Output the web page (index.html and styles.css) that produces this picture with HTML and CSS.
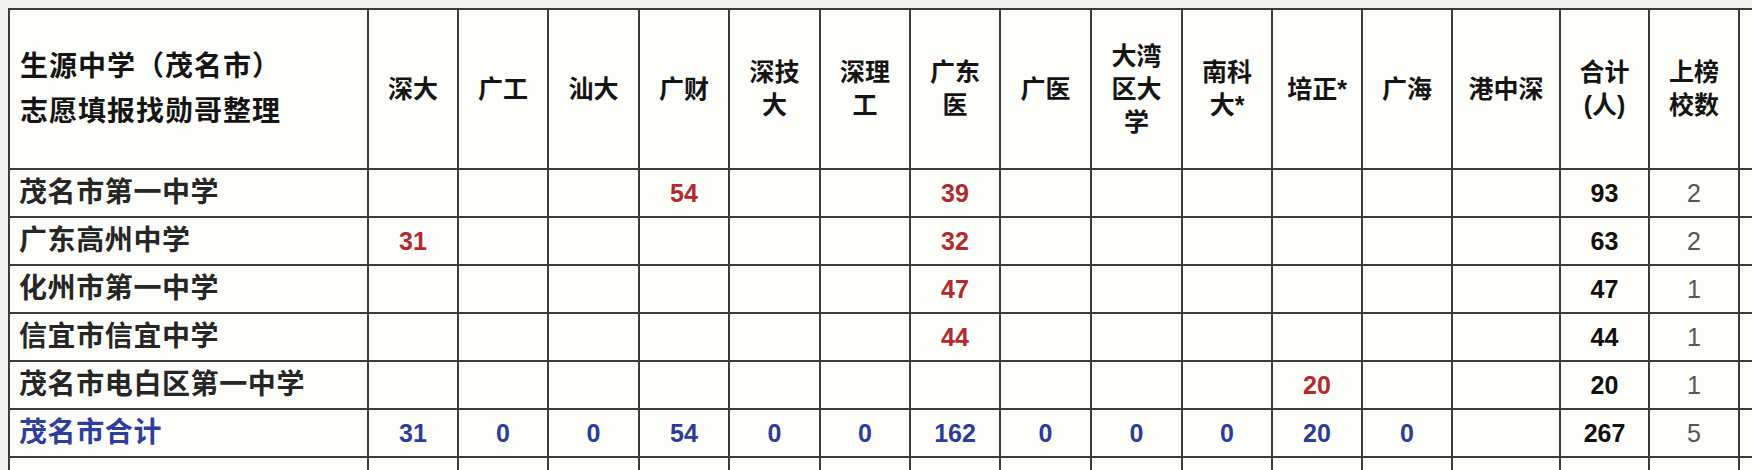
FILE: index.html
```html
<!DOCTYPE html>
<html lang="zh-CN">
<head>
<meta charset="utf-8">
<title>生源中学（茂名市）</title>
<link rel="stylesheet" href="styles.css">
</head>
<body>
<div class="sheet">
<table class="grid">
  <thead>
    <tr class="head">
      <th class="title w-name">生源中学（茂名市）<br>志愿填报找勋哥整理</th>
      <th class="w90">深大</th>
      <th class="w90">广工</th>
      <th class="w91">汕大</th>
      <th class="w90">广财</th>
      <th class="w91">深技<br>大</th>
      <th class="w90">深理<br>工</th>
      <th class="w90">广东<br>医</th>
      <th class="w91">广医</th>
      <th class="w91">大湾<br>区大<br>学</th>
      <th class="w90">南科<br>大*</th>
      <th class="w90">培正*</th>
      <th class="w90">广海</th>
      <th class="w108">港中深</th>
      <th class="w89">合计<br>(人)</th>
      <th class="w90">上榜<br>校数</th>
      <th class="w-extra"></th>
    </tr>
  </thead>
  <tbody>
    <tr>
      <td class="name">茂名市第一中学</td>
      <td></td><td></td><td></td><td class="red">54</td><td></td><td></td><td class="red">39</td>
      <td></td><td></td><td></td><td></td><td></td><td></td>
      <td class="total">93</td><td class="count">2</td><td></td>
    </tr>
    <tr>
      <td class="name">广东高州中学</td>
      <td class="red">31</td><td></td><td></td><td></td><td></td><td></td><td class="red">32</td>
      <td></td><td></td><td></td><td></td><td></td><td></td>
      <td class="total">63</td><td class="count">2</td><td></td>
    </tr>
    <tr>
      <td class="name">化州市第一中学</td>
      <td></td><td></td><td></td><td></td><td></td><td></td><td class="red">47</td>
      <td></td><td></td><td></td><td></td><td></td><td></td>
      <td class="total">47</td><td class="count">1</td><td></td>
    </tr>
    <tr>
      <td class="name">信宜市信宜中学</td>
      <td></td><td></td><td></td><td></td><td></td><td></td><td class="red">44</td>
      <td></td><td></td><td></td><td></td><td></td><td></td>
      <td class="total">44</td><td class="count">1</td><td></td>
    </tr>
    <tr>
      <td class="name">茂名市电白区第一中学</td>
      <td></td><td></td><td></td><td></td><td></td><td></td><td></td>
      <td></td><td></td><td></td><td class="red">20</td><td></td><td></td>
      <td class="total">20</td><td class="count">1</td><td></td>
    </tr>
    <tr class="sum">
      <td class="name">茂名市合计</td>
      <td>31</td><td>0</td><td>0</td><td>54</td><td>0</td><td>0</td><td>162</td>
      <td>0</td><td>0</td><td>0</td><td>20</td><td>0</td><td></td>
      <td class="total">267</td><td class="count">5</td><td></td>
    </tr>
    <tr>
      <td class="name"></td>
      <td></td><td></td><td></td><td></td><td></td><td></td><td></td>
      <td></td><td></td><td></td><td></td><td></td><td></td>
      <td></td><td></td><td></td>
    </tr>
  </tbody>
</table>
</div>
</body>
</html>
```

FILE: styles.css
```css
html, body {
  margin: 0;
  padding: 0;
  background: #f1f1ee;
  overflow: hidden;
}

.sheet {
  padding: 8px 0 0 8px;
  width: 1900px;
}

.grid {
  border-collapse: collapse;
  table-layout: fixed;
  background: #fdfdf9;
  font-family: "Liberation Sans", "Noto Sans CJK SC", sans-serif;
  color: #111;
}

.grid th,
.grid td {
  box-sizing: border-box;
  border: 2px solid #3b3b3b;
  padding: 0;
  text-align: center;
  vertical-align: middle;
  overflow: hidden;
  white-space: nowrap;
}

.w-name { width: 359px; }
.w89 { width: 89px; }
.w90 { width: 90px; }
.w91 { width: 91px; }
.w108 { width: 108px; }
.w-extra { width: 120px; }

.head th {
  height: 160px;
  font-size: 25px;
  font-weight: 700;
  line-height: 33px;
  color: #151515;
}

.head th.title {
  text-align: left;
  padding-left: 10px;
  font-size: 28px;
  letter-spacing: 1px;
  line-height: 45px;
}

.grid tbody td {
  height: 48px;
  font-size: 25px;
  font-weight: 700;
  line-height: 30px;
}

.grid td.name {
  text-align: left;
  padding-left: 9px;
  font-size: 28px;
  letter-spacing: 0.6px;
  color: #262626;
}

.red {
  color: #b4292d;
}

.sum td {
  color: #2c3c98;
}

.sum td.name {
  color: #2e3e9c;
}

.grid td.total {
  color: #111;
}

.grid td.count {
  font-weight: 400;
  color: #555;
}
```
